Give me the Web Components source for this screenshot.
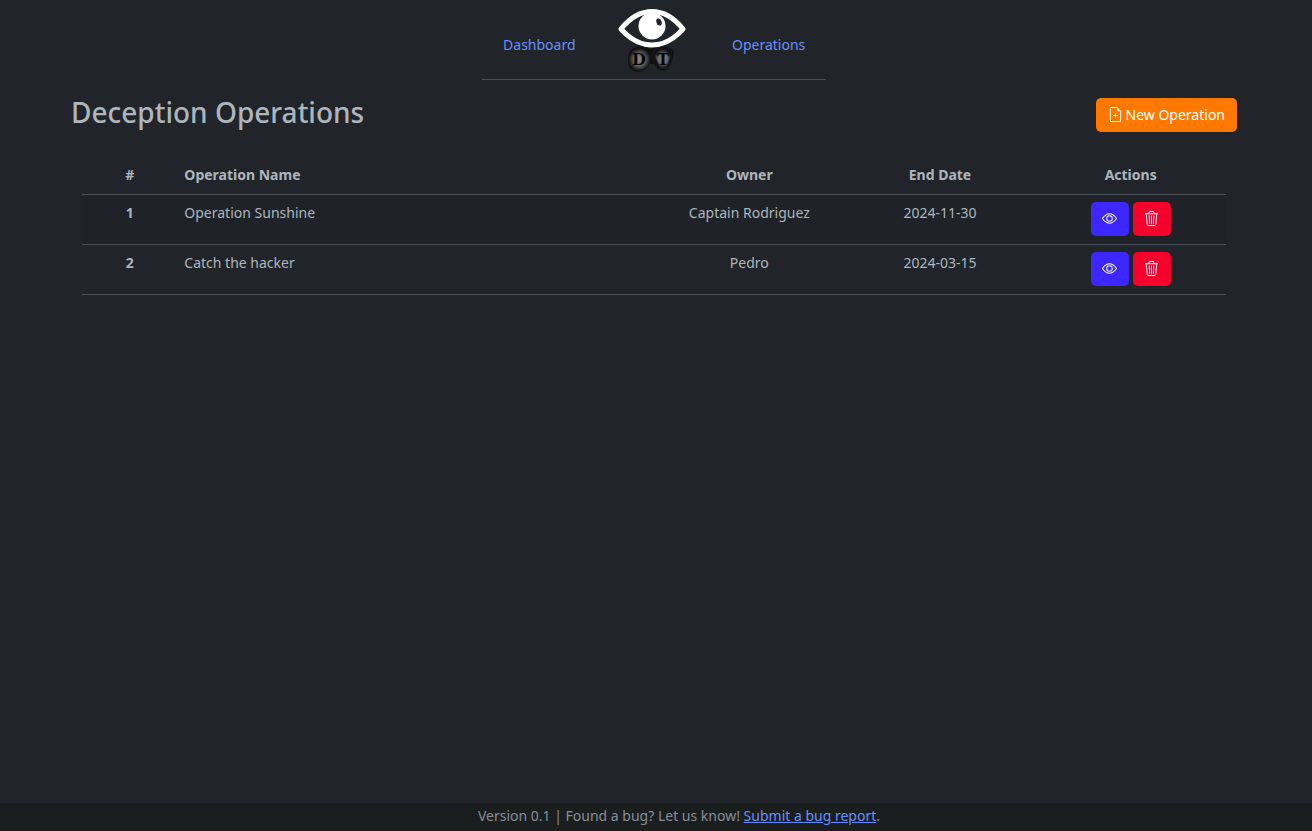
<!DOCTYPE html>
<html lang="en">
<head>
<meta charset="utf-8">
<meta name="viewport" content="width=device-width, initial-scale=1">
<title>Deception Operations</title>
<style>
  :root {
    --bg: #212529;
    --text: #adb5bd;
    --link: #6690ff;
    --line: #495057;
  }
  body {
    margin: 0;
    background: var(--bg);
    color: var(--text);
    font: 14px/21px "Noto Sans", "Open Sans", sans-serif;
  }
</style>
</head>
<body>
<dt-app>
  <dt-nav slot="header">
    <dt-link href="#dashboard" slot="start">Dashboard</dt-link>
    <dt-link href="#operations" slot="end">Operations</dt-link>
  </dt-nav>
  <dt-page-title>
    Deception Operations
    <dt-button slot="action" kind="create">New Operation</dt-button>
  </dt-page-title>
  <dt-operations></dt-operations>
  <dt-footer slot="footer">Version 0.1 | Found a bug? Let us know! <dt-link href="#bug" underlined>Submit a bug report</dt-link>.</dt-footer>
</dt-app>

<script>
function define(name, html, setup) {
  const template = document.createElement('template');
  template.innerHTML = html;
  customElements.define(name, class extends HTMLElement {
    constructor() {
      super();
      this.attachShadow({ mode: 'open' }).append(template.content.cloneNode(true));
    }
    connectedCallback() {
      if (setup) setup(this, this.shadowRoot);
    }
  });
}

const icons = {
  create: '<path d="M8 6.5a.5.5 0 0 1 .5.5v1.5H10a.5.5 0 0 1 0 1H8.5V11a.5.5 0 0 1-1 0V9.5H6a.5.5 0 0 1 0-1h1.5V7a.5.5 0 0 1 .5-.5"/><path d="M14 4.5V14a2 2 0 0 1-2 2H4a2 2 0 0 1-2-2V2a2 2 0 0 1 2-2h5.500zm-3 0A1.500 1.500 0 0 1 9.500 3V1H4a1 1 0 0 0-1 1v12a1 1 0 0 0 1 1h8a1 1 0 0 0 1-1V4.500z"/>',
  view: '<path d="M16 8s-3-5.500-8-5.500S0 8 0 8s3 5.500 8 5.500S16 8 16 8M1.173 8a13 13 0 0 1 1.660-2.043C4.120 4.668 5.880 3.500 8 3.500s3.879 1.168 5.168 2.457A13 13 0 0 1 14.828 8q-.086.130-.195.288c-.335.480-.830 1.120-1.465 1.755C11.879 11.332 10.119 12.500 8 12.500s-3.879-1.168-5.168-2.457A13 13 0 0 1 1.172 8z"/><path d="M8 5.500a2.500 2.500 0 1 0 0 5 2.500 2.500 0 0 0 0-5M4.500 8a3.500 3.500 0 1 1 7 0 3.500 3.500 0 0 1-7 0"/>',
  remove: '<path d="M6.500 1h3a.5.5 0 0 1 .5.5v1H6v-1a.5.5 0 0 1 .5-.5M11 2.500v-1A1.500 1.500 0 0 0 9.500 0h-3A1.500 1.500 0 0 0 5 1.500v1H1.500a.5.5 0 0 0 0 1h.538l.853 10.660A2 2 0 0 0 4.885 16h6.230a2 2 0 0 0 1.994-1.840l.853-10.660h.538a.5.5 0 0 0 0-1zm1.958 1-.846 10.580a1 1 0 0 1-.997.920h-6.230a1 1 0 0 1-.997-.920L3.042 3.500zm-7.487 1a.5.5 0 0 1 .528.470l.5 8.500a.5.5 0 0 1-.998.060L5 5.030a.5.5 0 0 1 .470-.530Zm5.058 0a.5.5 0 0 1 .470.530l-.5 8.500a.5.5 0 1 1-.998-.060l.5-8.500a.5.5 0 0 1 .528-.470M8 4.500a.5.5 0 0 1 .5.5v8.500a.5.5 0 0 1-1 0V5a.5.5 0 0 1 .5-.5"/>'
};

define('dt-app', `
  <style>
    :host { display: flex; flex-direction: column; min-height: 100vh; }
    .frame { flex: 1; padding-right: 4px; }
    main { width: 90%; max-width: 1166px; margin: 0 auto; }
  </style>
  <div class="frame">
    <slot name="header"></slot>
    <main><slot></slot></main>
  </div>
  <slot name="footer"></slot>`);

define('dt-logo', `
  <style>
    :host { display: block; }
    svg { display: block; width: 68px; height: 64px; }
  </style>
  <svg viewBox="0 0 68 64" role="img" aria-label="DT">
    <defs>
      <radialGradient id="glow">
        <stop offset="0" stop-color="#858585"/>
        <stop offset=".5" stop-color="#6a6a6a"/>
        <stop offset=".8" stop-color="#303030"/>
        <stop offset="1" stop-color="#111"/>
      </radialGradient>
    </defs>
    <path fill="#111" d="M10 50Q10 39 19 38Q26 36 33 40Q39 36 50 38Q58 40 55 48Q53 59 46 62Q40 62 36 55L32 55Q28 62 21 63Q10 63 10 50Z"/>
    <ellipse cx="21.500" cy="50.500" rx="11" ry="11.500" fill="url(#glow)"/>
    <path d="M38 40H51Q55 41 53 47L49 58Q45 62 41 57L36 47Q35 41 38 40Z" fill="url(#glow)" stroke="#1c1c1c" stroke-width="1"/>
    <g font-family="DejaVu Serif, serif" font-weight="700" font-size="16" text-anchor="middle" fill="#080808">
      <text x="21" y="56">D</text>
      <text x="45" y="56">T</text>
    </g>
    <path d="M3 20Q17 2.500 34 2.500T65 20Q51 36 34 36T3 20Z" fill="#212529" stroke="#fff" stroke-width="5" stroke-linejoin="round"/>
    <circle cx="34" cy="17" r="13.500" fill="#fff"/>
    <ellipse cx="41" cy="13" rx="2.600" ry="3.600" fill="#212529" transform="rotate(-18 41 13)"/>
  </svg>`);

define('dt-nav', `
  <style>
    :host { display: block; }
    nav {
      display: grid; grid-template-columns: repeat(3, 1fr);
      width: 344px; max-width: 100%; height: 79px; margin: 0 auto;
      justify-items: center; align-items: center;
      border-bottom: 1px solid var(--line);
    }
    dt-logo { padding: 2px 3px 0 0; }
    .item { padding-top: 10px; }
  </style>
  <nav>
    <div class="item"><slot name="start"></slot></div>
    <dt-logo></dt-logo>
    <div class="item"><slot name="end"></slot></div>
  </nav>`);

define('dt-link', `
  <style>
    :host { display: inline; }
    a { color: var(--link); text-decoration: none; }
    :host([underlined]) a { text-decoration: underline; }
  </style>
  <a><slot></slot></a>`,
  (host, root) => root.querySelector('a').setAttribute('href', host.getAttribute('href')));

define('dt-page-title', `
  <style>
    :host { display: flex; justify-content: space-between; align-items: flex-start; padding-top: 14px; }
    h1 { margin: 0; font-size: 28px; line-height: 36px; font-weight: 500; }
    .action { padding-top: 4px; }
  </style>
  <h1><slot></slot></h1>
  <div class="action"><slot name="action"></slot></div>`);

define('dt-button', `
  <style>
    :host { display: inline-block; vertical-align: top; }
    button {
      display: flex; align-items: center; justify-content: center; gap: 3px;
      height: 34px; min-width: 38px; padding: 0 12px 2px;
      border: 0; border-radius: 5px; color: #fff; font: inherit; cursor: pointer;
    }
    :host([label]) button { padding: 0 11px 2px; }
    svg { width: 15px; height: 15px; fill: currentColor; }
    .create { background: #ff7800; }
    .view { background: #3d26ff; }
    .remove { background: #f8002d; }
  </style>
  <button type="button"><svg viewBox="0 0 16 16" aria-hidden="true"></svg><slot></slot></button>`,
  (host, root) => {
    const kind = host.getAttribute('kind');
    const button = root.querySelector('button');
    button.className = kind;
    if (host.hasAttribute('label')) {
      button.setAttribute('aria-label', host.getAttribute('label'));
      button.querySelector('slot').remove();
    }
    root.querySelector('svg').innerHTML = icons[kind];
  });

define('dt-operations', `
  <style>
    :host { display: block; padding: 25px 11px 0; }
    table { width: 100%; table-layout: fixed; border-collapse: separate; border-spacing: 0; }
    th, td { padding: 7px 8px; text-align: center; vertical-align: top; border-bottom: 1px solid var(--line); }
    thead th { padding-bottom: 9px; }
    tbody tr { height: 50px; }
    tbody tr:nth-child(odd) { background: #1f2327; }
    th.name, td.name { padding-left: 7px; text-align: left; }
    .number { width: 8.3333%; }
    .wide { width: 41.6667%; }
    .actions { display: flex; justify-content: center; gap: 4px; }
  </style>
  <table>
    <colgroup><col class="number"><col class="wide"><col><col><col></colgroup>
    <thead>
      <tr>
        <th scope="col">#</th><th scope="col" class="name">Operation Name</th>
        <th scope="col">Owner</th><th scope="col">End Date</th><th scope="col">Actions</th>
      </tr>
    </thead>
    <tbody></tbody>
  </table>`,
  (host, root) => {
    const operations = [
      ['Operation Sunshine', 'Captain Rodriguez', '2024-11-30'],
      ['Catch the hacker', 'Pedro', '2024-03-15']
    ];
    root.querySelector('tbody').innerHTML = operations.map(([name, owner, end], i) => `
      <tr>
        <th scope="row">${i + 1}</th><td class="name">${name}</td><td>${owner}</td><td>${end}</td>
        <td><div class="actions">
          <dt-button kind="view" label="View ${name}"></dt-button>
          <dt-button kind="remove" label="Delete ${name}"></dt-button>
        </div></td>
      </tr>`).join('');
  });

define('dt-footer', `
  <style>
    :host { display: block; }
    footer { padding: 2px 0 5px 46px; text-align: center; background: #1b1e1f; color: #868e96; }
  </style>
  <footer><slot></slot></footer>`);
</script>
</body>
</html>
